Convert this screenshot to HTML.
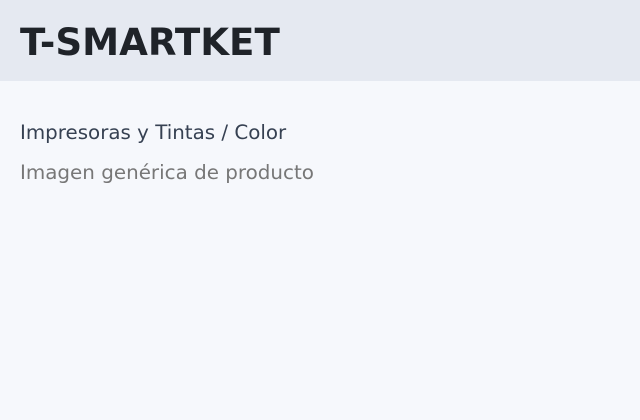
<!DOCTYPE html>
<html><head><meta charset="utf-8"><style>
html,body{margin:0;padding:0;width:640px;height:420px;overflow:hidden;background:#f6f8fc;font-family:"DejaVu Sans","Liberation Sans",sans-serif}
.h{height:81px;background:#e5e9f1;position:relative}
.h div{position:absolute;left:20px;top:21px;font-size:37.2px;font-weight:bold;color:#1f2329;line-height:42px;white-space:nowrap}
.a{position:absolute;left:20px;top:120px;font-size:19.85px;color:#364152;line-height:26px;white-space:nowrap}
.b{position:absolute;left:20px;top:160px;font-size:19.9px;color:#777;line-height:26px;white-space:nowrap}
</style></head><body>
<div class="h"><div>T-SMARTKET</div></div>
<div class="a">Impresoras y Tintas / Color</div>
<div class="b">Imagen genérica de producto</div>
</body></html>
